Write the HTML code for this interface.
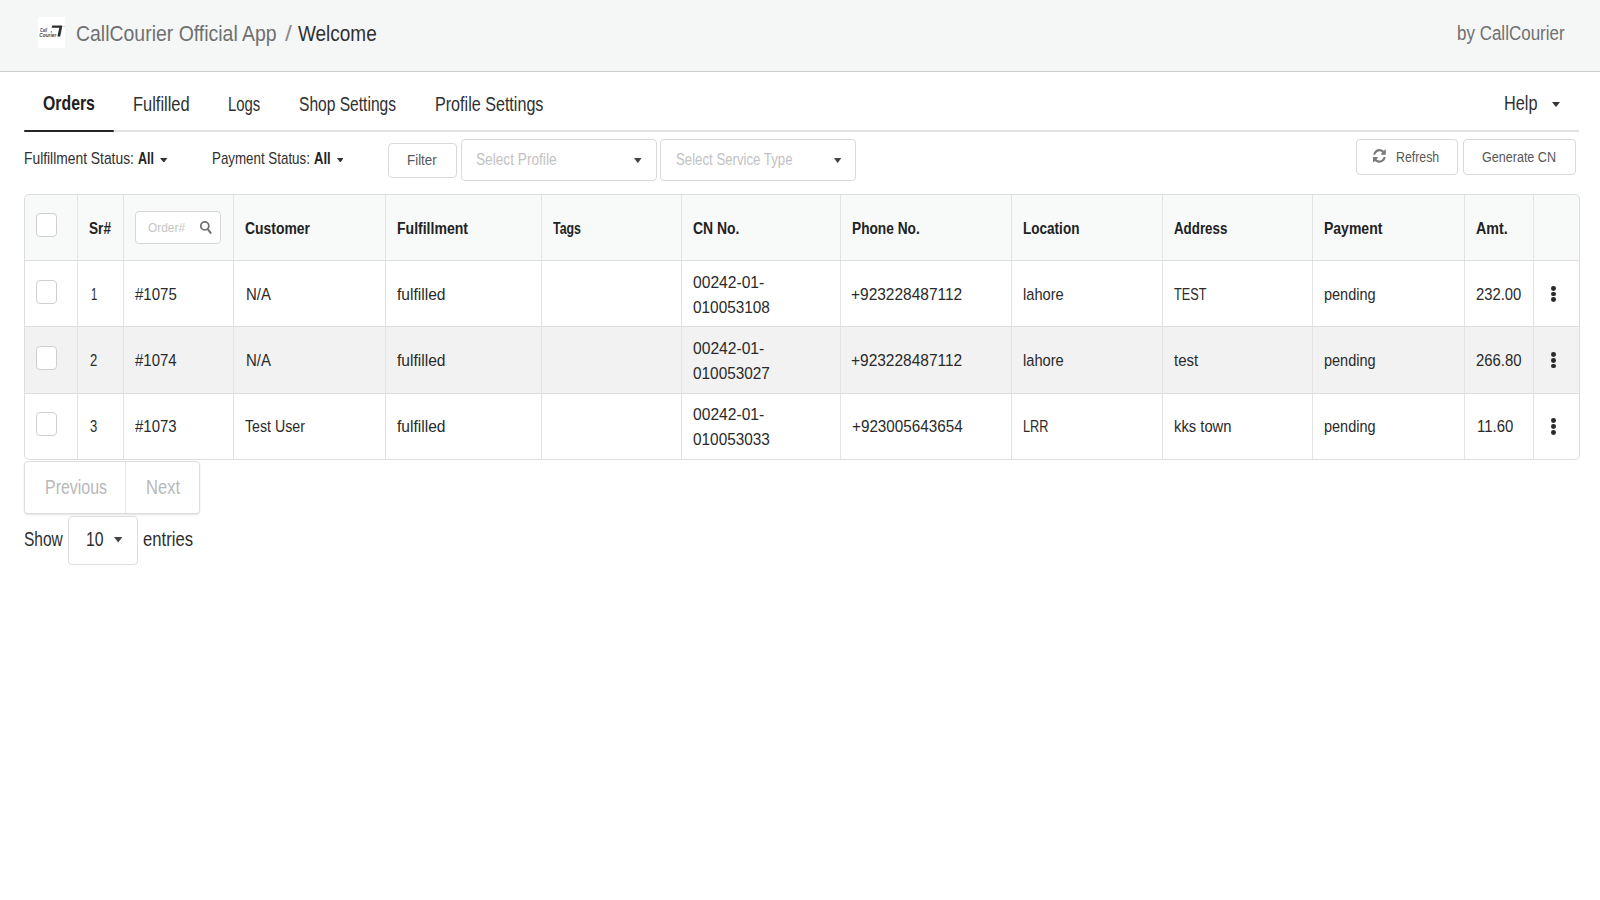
<!DOCTYPE html>
<html><head><meta charset="utf-8"><title>CallCourier Official App</title>
<style>
html,body{margin:0;padding:0;width:1600px;height:900px;overflow:hidden;background:#fff;}
body{position:relative;font-family:"Liberation Sans",sans-serif;}
.t{position:absolute;white-space:nowrap;transform-origin:0 0;}
.r{position:absolute;box-sizing:border-box;}
</style></head><body>
<div class="r" style="left:0px;top:0px;width:1600px;height:71px;background:#f5f7f7;"></div>
<div class="r" style="left:0px;top:71px;width:1600px;height:1px;background:#c9cccc;"></div>
<div class="r" style="left:38px;top:17px;width:27px;height:31px;background:#ffffff;"></div>
<svg class="r" style="left:38px;top:17px" width="27" height="31" viewBox="0 0 27 31"><polygon points="14.3,8.5 24.4,8.5 22.2,19.6 19.4,19.6 21.3,10.7 13.6,10.7" fill="#2e2e2e"/><text x="2" y="15.4" font-family="Liberation Sans" font-weight="bold" font-style="italic" font-size="5.2" textLength="7" lengthAdjust="spacingAndGlyphs" fill="#444">Call</text><circle cx="13.4" cy="14.9" r="0.7" fill="#555"/><text x="1.3" y="20.4" font-family="Liberation Sans" font-weight="bold" font-style="italic" font-size="5.2" textLength="17" lengthAdjust="spacingAndGlyphs" fill="#444">Courier</text><circle cx="26" cy="9.5" r="0.6" fill="#999"/></svg>
<div class="t" style="left:76.20px;top:23px;font-size:21.2px;line-height:21.2px;color:#707070;transform:scaleX(0.9179);">CallCourier Official App</div>
<div class="t" style="left:285.00px;top:23px;font-size:21.2px;line-height:21.2px;color:#8c8c8c;transform:scaleX(1.1667);">/</div>
<div class="t" style="left:297.60px;top:23px;font-size:21.2px;line-height:21.2px;color:#303030;transform:scaleX(0.8955);">Welcome</div>
<div class="t" style="left:1456.60px;top:24px;font-size:19.6px;line-height:19.6px;color:#707070;transform:scaleX(0.8669);">by CallCourier</div>
<div class="t" style="left:42.50px;top:94px;font-size:19.8px;line-height:19.8px;color:#212121;font-weight:bold;transform:scaleX(0.8000);">Orders</div>
<div class="t" style="left:132.90px;top:95px;font-size:19.8px;line-height:19.8px;color:#303030;transform:scaleX(0.8308);">Fulfilled</div>
<div class="t" style="left:228.00px;top:95px;font-size:19.8px;line-height:19.8px;color:#303030;transform:scaleX(0.7534);">Logs</div>
<div class="t" style="left:298.80px;top:95px;font-size:19.8px;line-height:19.8px;color:#303030;transform:scaleX(0.7878);">Shop Settings</div>
<div class="t" style="left:435.00px;top:95px;font-size:19.8px;line-height:19.8px;color:#303030;transform:scaleX(0.8150);">Profile Settings</div>
<div class="t" style="left:1503.75px;top:94px;font-size:19.5px;line-height:19.5px;color:#303030;transform:scaleX(0.8336);">Help</div>
<svg class="r" style="left:1552px;top:102.2px" width="8" height="5.0" viewBox="0 0 8 5.0"><polygon points="0,0 8,0 4.0,5.0" fill="#333"/></svg>
<div class="r" style="left:24px;top:130px;width:1555px;height:2.1999999999999886px;background:#e1e3e3;"></div>
<div class="r" style="left:24px;top:130px;width:89.75px;height:2.4000000000000057px;background:#262626;border-radius:1px;"></div>
<div class="t" style="left:24.40px;top:150px;font-size:16.4px;line-height:16.4px;color:#303030;transform:scaleX(0.8437);">Fulfillment Status:</div>
<div class="t" style="left:138.00px;top:150px;font-size:16.4px;line-height:16.4px;color:#222;font-weight:bold;transform:scaleX(0.7619);">All</div>
<svg class="r" style="left:160px;top:157.9px" width="7.5" height="4.599999999999994" viewBox="0 0 7.5 4.599999999999994"><polygon points="0,0 7.5,0 3.75,4.599999999999994" fill="#333"/></svg>
<div class="t" style="left:212.25px;top:150px;font-size:16.4px;line-height:16.4px;color:#303030;transform:scaleX(0.8141);">Payment Status:</div>
<div class="t" style="left:313.75px;top:150px;font-size:16.4px;line-height:16.4px;color:#222;font-weight:bold;transform:scaleX(0.7929);">All</div>
<svg class="r" style="left:336.9px;top:157.9px" width="6.600000000000023" height="4.599999999999994" viewBox="0 0 6.600000000000023 4.599999999999994"><polygon points="0,0 6.600000000000023,0 3.3000000000000114,4.599999999999994" fill="#333"/></svg>
<div class="r" style="left:388px;top:143px;width:69px;height:35px;background:#fff;border:1px solid #d9d9d9;box-sizing:border-box;border-radius:4px;"></div>
<div class="t" style="left:407.40px;top:152px;font-size:15.2px;line-height:15.2px;color:#585858;transform:scaleX(0.8800);">Filter</div>
<div class="r" style="left:461px;top:138.5px;width:196px;height:42.0px;background:#fff;border:1px solid #d9d9d9;box-sizing:border-box;border-radius:4px;"></div>
<div class="t" style="left:476.10px;top:152px;font-size:16.0px;line-height:16.0px;color:#c2c2c2;transform:scaleX(0.8541);">Select Profile</div>
<svg class="r" style="left:634.3px;top:157.9px" width="7.600000000000023" height="5.099999999999994" viewBox="0 0 7.600000000000023 5.099999999999994"><polygon points="0,0 7.600000000000023,0 3.8000000000000114,5.099999999999994" fill="#444"/></svg>
<div class="r" style="left:660px;top:138.5px;width:196px;height:42.0px;background:#fff;border:1px solid #d9d9d9;box-sizing:border-box;border-radius:4px;"></div>
<div class="t" style="left:675.90px;top:152px;font-size:16.0px;line-height:16.0px;color:#c2c2c2;transform:scaleX(0.8255);">Select Service Type</div>
<svg class="r" style="left:834.3px;top:157.9px" width="7.300000000000068" height="5.099999999999994" viewBox="0 0 7.300000000000068 5.099999999999994"><polygon points="0,0 7.300000000000068,0 3.650000000000034,5.099999999999994" fill="#444"/></svg>
<div class="r" style="left:1355.5px;top:138.5px;width:102.5px;height:36.0px;background:#fff;border:1px solid #d9d9d9;box-sizing:border-box;border-radius:4px;"></div>
<div class="t" style="left:1396.00px;top:149px;font-size:15.2px;line-height:15.2px;color:#585858;transform:scaleX(0.8122);">Refresh</div>
<svg class="r" style="left:1373.2px;top:149.2px" width="12.8" height="13.8" viewBox="0 0 1536 1536" preserveAspectRatio="none"><g transform="translate(1536,1536) scale(-1,-1)"><path fill="#7a7a7a" d="M1511 928q0 5-1 7q-64 268-268 434.5T764 1536q-146 0-282.5-55T239 1324L109 1453q-19 19-45 19t-45-19T0 1408V960q0-26 19-45t45-19h448q26 0 45 19t19 45t-19 45L420 1142q71 66 161 102t187 36q134 0 250-65t186-179q11-17 53-117q8-23 30-23h192q13 0 22.5 9.5T1511 928zm25-800v448q0 26-19 45t-45 19h-448q-26 0-45-19t-19-45t19-45L1117 394Q969 256 768 256q-134 0-250 65T332 500q-11 17-53 117q-8 23-30 23H50q-13 0-22.5-9.5T18 608v-7q65-268 270-434.5T768 0q146 0 284 55.5T1297 212l130-129q19-19 45-19t45 19t19 45z"/></g></svg>
<div class="r" style="left:1463px;top:138.5px;width:113px;height:36.0px;background:#fff;border:1px solid #d9d9d9;box-sizing:border-box;border-radius:4px;"></div>
<div class="t" style="left:1482.00px;top:149px;font-size:15.2px;line-height:15.2px;color:#585858;transform:scaleX(0.8268);">Generate CN</div>
<div class="r" style="left:24px;top:193.8px;width:1556px;height:266.2px;background:#fff;border-radius:5px;overflow:hidden;"></div>
<div class="r" style="left:24px;top:193.8px;width:1556px;height:67.19999999999999px;background:#f8f9f9;border-radius:5px 5px 0 0;"></div>
<div class="r" style="left:24px;top:327px;width:1556px;height:66.39999999999998px;background:#f2f2f2;"></div>
<div class="r" style="left:77.1px;top:194px;width:1.0px;height:265.5px;background:#e3e3e3;"></div>
<div class="r" style="left:123.0px;top:194px;width:1.0px;height:265.5px;background:#e3e3e3;"></div>
<div class="r" style="left:233.0px;top:194px;width:1.0px;height:265.5px;background:#e3e3e3;"></div>
<div class="r" style="left:385.0px;top:194px;width:1.0px;height:265.5px;background:#e3e3e3;"></div>
<div class="r" style="left:541.0px;top:194px;width:1.0px;height:265.5px;background:#e3e3e3;"></div>
<div class="r" style="left:681.25px;top:194px;width:1.0px;height:265.5px;background:#e3e3e3;"></div>
<div class="r" style="left:839.5px;top:194px;width:1.0px;height:265.5px;background:#e3e3e3;"></div>
<div class="r" style="left:1011.0px;top:194px;width:1.0px;height:265.5px;background:#e3e3e3;"></div>
<div class="r" style="left:1161.5px;top:194px;width:1.0px;height:265.5px;background:#e3e3e3;"></div>
<div class="r" style="left:1312.0px;top:194px;width:1.0px;height:265.5px;background:#e3e3e3;"></div>
<div class="r" style="left:1464.0px;top:194px;width:1.0px;height:265.5px;background:#e3e3e3;"></div>
<div class="r" style="left:1533.0px;top:194px;width:1.0px;height:265.5px;background:#e3e3e3;"></div>
<div class="r" style="left:24px;top:260.1px;width:1556px;height:1.2999999999999545px;background:#dedede;"></div>
<div class="r" style="left:24px;top:326.1px;width:1556px;height:1.2999999999999545px;background:#dedede;"></div>
<div class="r" style="left:24px;top:392.5px;width:1556px;height:1.2999999999999545px;background:#dedede;"></div>
<div class="r" style="left:24px;top:193.8px;width:1556px;height:266.2px;border:1.5px solid #dcdede;box-sizing:border-box;border-radius:5px;"></div>
<div class="r" style="left:36px;top:213px;width:21px;height:24px;background:#fff;border:1.6px solid #cfcfcf;box-sizing:border-box;border-radius:4px;"></div>
<div class="t" style="left:89.00px;top:221px;font-size:16.8px;line-height:16.8px;color:#222;font-weight:bold;transform:scaleX(0.8111);">Sr#</div>
<div class="r" style="left:135.3px;top:210.6px;width:85.29999999999998px;height:33.900000000000006px;background:#fff;border:1.2px solid #d7d7d7;box-sizing:border-box;border-radius:4px;"></div>
<div class="t" style="left:148.10px;top:221px;font-size:13.6px;line-height:13.6px;color:#c5c5c5;transform:scaleX(0.8755);">Order#</div>
<svg class="r" style="left:199px;top:220px" width="14" height="15" viewBox="0 0 14 15"><circle cx="5.8" cy="5.9" r="4.0" fill="none" stroke="#707070" stroke-width="1.8"/><line x1="8.6" y1="9.0" x2="11.6" y2="12.9" stroke="#707070" stroke-width="2" stroke-linecap="round"/></svg>
<div class="t" style="left:245.00px;top:221px;font-size:16.8px;line-height:16.8px;color:#222;font-weight:bold;transform:scaleX(0.8293);">Customer</div>
<div class="t" style="left:397.00px;top:221px;font-size:16.8px;line-height:16.8px;color:#222;font-weight:bold;transform:scaleX(0.8365);">Fulfillment</div>
<div class="t" style="left:553.00px;top:221px;font-size:16.8px;line-height:16.8px;color:#222;font-weight:bold;transform:scaleX(0.7368);">Tags</div>
<div class="t" style="left:692.50px;top:221px;font-size:16.8px;line-height:16.8px;color:#222;font-weight:bold;transform:scaleX(0.8304);">CN No.</div>
<div class="t" style="left:851.50px;top:221px;font-size:16.8px;line-height:16.8px;color:#222;font-weight:bold;transform:scaleX(0.8163);">Phone No.</div>
<div class="t" style="left:1023.00px;top:221px;font-size:16.8px;line-height:16.8px;color:#222;font-weight:bold;transform:scaleX(0.8071);">Location</div>
<div class="t" style="left:1173.60px;top:221px;font-size:16.8px;line-height:16.8px;color:#222;font-weight:bold;transform:scaleX(0.7941);">Address</div>
<div class="t" style="left:1324.00px;top:221px;font-size:16.8px;line-height:16.8px;color:#222;font-weight:bold;transform:scaleX(0.8343);">Payment</div>
<div class="t" style="left:1475.80px;top:221px;font-size:16.8px;line-height:16.8px;color:#222;font-weight:bold;transform:scaleX(0.8482);">Amt.</div>
<div class="r" style="left:36px;top:280.0px;width:21px;height:24.0px;background:#fff;border:1.6px solid #cfcfcf;box-sizing:border-box;border-radius:4px;"></div>
<div class="t" style="left:90.60px;top:286px;font-size:17.2px;line-height:17.2px;color:#2a2a2a;transform:scaleX(0.6545);">1</div>
<div class="t" style="left:135.00px;top:286px;font-size:17.2px;line-height:17.2px;color:#2a2a2a;transform:scaleX(0.8752);">#1075</div>
<div class="t" style="left:245.60px;top:286px;font-size:17.2px;line-height:17.2px;color:#2a2a2a;transform:scaleX(0.8696);">N/A</div>
<div class="t" style="left:397.00px;top:286px;font-size:17.2px;line-height:17.2px;color:#2a2a2a;transform:scaleX(0.9065);">fulfilled</div>
<div class="t" style="left:692.50px;top:274px;font-size:17.2px;line-height:17.2px;color:#2a2a2a;transform:scaleX(0.9091);">00242-01-</div>
<div class="t" style="left:692.50px;top:299px;font-size:17.2px;line-height:17.2px;color:#2a2a2a;transform:scaleX(0.8940);">010053108</div>
<div class="t" style="left:851.25px;top:286px;font-size:17.2px;line-height:17.2px;color:#2a2a2a;transform:scaleX(0.9008);">+923228487112</div>
<div class="t" style="left:1023.00px;top:286px;font-size:17.2px;line-height:17.2px;color:#2a2a2a;transform:scaleX(0.8534);">lahore</div>
<div class="t" style="left:1173.75px;top:286px;font-size:17.2px;line-height:17.2px;color:#2a2a2a;transform:scaleX(0.7386);">TEST</div>
<div class="t" style="left:1324.40px;top:286px;font-size:17.2px;line-height:17.2px;color:#2a2a2a;transform:scaleX(0.8424);">pending</div>
<div class="t" style="left:1475.90px;top:286px;font-size:17.2px;line-height:17.2px;color:#2a2a2a;transform:scaleX(0.8618);">232.00</div>
<div class="r" style="left:1551.4px;top:286.00px;width:4.8px;height:4.8px;border-radius:50%;background:#2a2a2a"></div>
<div class="r" style="left:1551.4px;top:291.70px;width:4.8px;height:4.8px;border-radius:50%;background:#2a2a2a"></div>
<div class="r" style="left:1551.4px;top:297.40px;width:4.8px;height:4.8px;border-radius:50%;background:#2a2a2a"></div>
<div class="r" style="left:36px;top:346.2px;width:21px;height:24.0px;background:#fff;border:1.6px solid #cfcfcf;box-sizing:border-box;border-radius:4px;"></div>
<div class="t" style="left:89.60px;top:352px;font-size:17.2px;line-height:17.2px;color:#2a2a2a;transform:scaleX(0.7584);">2</div>
<div class="t" style="left:135.00px;top:352px;font-size:17.2px;line-height:17.2px;color:#2a2a2a;transform:scaleX(0.8700);">#1074</div>
<div class="t" style="left:245.60px;top:352px;font-size:17.2px;line-height:17.2px;color:#2a2a2a;transform:scaleX(0.8696);">N/A</div>
<div class="t" style="left:397.00px;top:352px;font-size:17.2px;line-height:17.2px;color:#2a2a2a;transform:scaleX(0.9065);">fulfilled</div>
<div class="t" style="left:692.50px;top:340px;font-size:17.2px;line-height:17.2px;color:#2a2a2a;transform:scaleX(0.9091);">00242-01-</div>
<div class="t" style="left:692.50px;top:365px;font-size:17.2px;line-height:17.2px;color:#2a2a2a;transform:scaleX(0.8940);">010053027</div>
<div class="t" style="left:851.25px;top:352px;font-size:17.2px;line-height:17.2px;color:#2a2a2a;transform:scaleX(0.9008);">+923228487112</div>
<div class="t" style="left:1023.00px;top:352px;font-size:17.2px;line-height:17.2px;color:#2a2a2a;transform:scaleX(0.8534);">lahore</div>
<div class="t" style="left:1173.75px;top:352px;font-size:17.2px;line-height:17.2px;color:#2a2a2a;transform:scaleX(0.8739);">test</div>
<div class="t" style="left:1324.40px;top:352px;font-size:17.2px;line-height:17.2px;color:#2a2a2a;transform:scaleX(0.8424);">pending</div>
<div class="t" style="left:1475.90px;top:352px;font-size:17.2px;line-height:17.2px;color:#2a2a2a;transform:scaleX(0.8665);">266.80</div>
<div class="r" style="left:1551.4px;top:352.20px;width:4.8px;height:4.8px;border-radius:50%;background:#2a2a2a"></div>
<div class="r" style="left:1551.4px;top:357.90px;width:4.8px;height:4.8px;border-radius:50%;background:#2a2a2a"></div>
<div class="r" style="left:1551.4px;top:363.60px;width:4.8px;height:4.8px;border-radius:50%;background:#2a2a2a"></div>
<div class="r" style="left:36px;top:412.4px;width:21px;height:24.0px;background:#fff;border:1.6px solid #cfcfcf;box-sizing:border-box;border-radius:4px;"></div>
<div class="t" style="left:89.60px;top:418px;font-size:17.2px;line-height:17.2px;color:#2a2a2a;transform:scaleX(0.7584);">3</div>
<div class="t" style="left:135.00px;top:418px;font-size:17.2px;line-height:17.2px;color:#2a2a2a;transform:scaleX(0.8700);">#1073</div>
<div class="t" style="left:245.00px;top:418px;font-size:17.2px;line-height:17.2px;color:#2a2a2a;transform:scaleX(0.8262);">Test User</div>
<div class="t" style="left:397.00px;top:418px;font-size:17.2px;line-height:17.2px;color:#2a2a2a;transform:scaleX(0.9065);">fulfilled</div>
<div class="t" style="left:692.50px;top:406px;font-size:17.2px;line-height:17.2px;color:#2a2a2a;transform:scaleX(0.9091);">00242-01-</div>
<div class="t" style="left:692.50px;top:431px;font-size:17.2px;line-height:17.2px;color:#2a2a2a;transform:scaleX(0.8940);">010053033</div>
<div class="t" style="left:851.75px;top:418px;font-size:17.2px;line-height:17.2px;color:#2a2a2a;transform:scaleX(0.8869);">+923005643654</div>
<div class="t" style="left:1023.25px;top:418px;font-size:17.2px;line-height:17.2px;color:#2a2a2a;transform:scaleX(0.7418);">LRR</div>
<div class="t" style="left:1173.75px;top:418px;font-size:17.2px;line-height:17.2px;color:#2a2a2a;transform:scaleX(0.8598);">kks town</div>
<div class="t" style="left:1324.40px;top:418px;font-size:17.2px;line-height:17.2px;color:#2a2a2a;transform:scaleX(0.8424);">pending</div>
<div class="t" style="left:1476.90px;top:418px;font-size:17.2px;line-height:17.2px;color:#2a2a2a;transform:scaleX(0.8695);">11.60</div>
<div class="r" style="left:1551.4px;top:418.40px;width:4.8px;height:4.8px;border-radius:50%;background:#2a2a2a"></div>
<div class="r" style="left:1551.4px;top:424.10px;width:4.8px;height:4.8px;border-radius:50%;background:#2a2a2a"></div>
<div class="r" style="left:1551.4px;top:429.80px;width:4.8px;height:4.8px;border-radius:50%;background:#2a2a2a"></div>
<div class="r" style="left:24.4px;top:461.4px;width:175.29999999999998px;height:52.5px;background:#fff;border:1px solid #dedede;box-sizing:border-box;border-radius:4px;box-shadow:0 1px 2px rgba(0,0,0,0.12);"></div>
<div class="r" style="left:124.6px;top:461.9px;width:1.0px;height:51.5px;background:#e6e6e6;"></div>
<div class="t" style="left:44.60px;top:478px;font-size:19.4px;line-height:19.4px;color:#b8b8b8;transform:scaleX(0.8225);">Previous</div>
<div class="t" style="left:145.60px;top:478px;font-size:19.4px;line-height:19.4px;color:#b8b8b8;transform:scaleX(0.8527);">Next</div>
<div class="t" style="left:24.00px;top:530px;font-size:19.4px;line-height:19.4px;color:#2e2e2e;transform:scaleX(0.8000);">Show</div>
<div class="r" style="left:67.5px;top:516.25px;width:70.5px;height:49.049999999999955px;background:#fff;border:1px solid #dedede;box-sizing:border-box;border-radius:4px;"></div>
<div class="t" style="left:85.60px;top:530px;font-size:19.4px;line-height:19.4px;color:#2e2e2e;transform:scaleX(0.8139);">10</div>
<svg class="r" style="left:113.6px;top:537.2px" width="8.400000000000006" height="5.599999999999909" viewBox="0 0 8.400000000000006 5.599999999999909"><polygon points="0,0 8.400000000000006,0 4.200000000000003,5.599999999999909" fill="#444"/></svg>
<div class="t" style="left:142.80px;top:530px;font-size:19.4px;line-height:19.4px;color:#2e2e2e;transform:scaleX(0.8584);">entries</div>
</body></html>
